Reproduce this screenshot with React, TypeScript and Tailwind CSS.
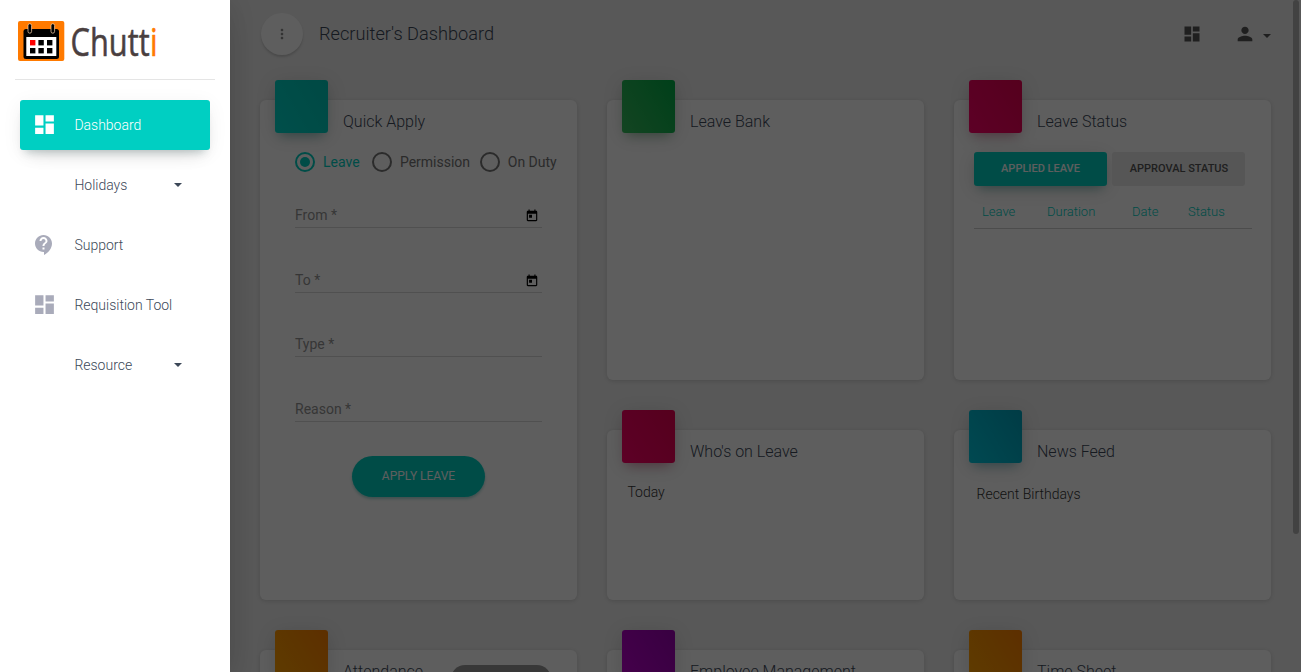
import type { ReactNode } from "react";
import {
  MdDashboard,
  MdContactSupport,
  MdPerson,
  MdMoreVert,
} from "react-icons/md";

function Caret({ className }: { className: string }) {
  return (
    <svg viewBox="0 0 8 4" className={"h-1 w-2 " + className}>
      <path d="M0 0h8L4 4z" fill="currentColor" />
    </svg>
  );
}

function Logo() {
  return (
    <svg width="150" height="42" viewBox="0 0 150 42" className="overflow-visible">
      <rect x="0" y="1" width="46.3" height="40" rx="2" fill="#ff7a00" />
      <rect x="5.5" y="9" width="35.5" height="30" rx="2.5" fill="#000" />
      <rect x="8.3" y="17" width="30" height="19" fill="#fff" />
      <rect x="10" y="3.7" width="3.6" height="9.5" rx="1.8" fill="#000" stroke="#ffd9b0" strokeWidth="0.7" />
      <rect x="33" y="3.7" width="3.6" height="9.5" rx="1.8" fill="#000" stroke="#ffd9b0" strokeWidth="0.7" />
      <rect x="12" y="20" width="5.4" height="5.4" fill="#f00" />
      <rect x="20.4" y="20" width="5.4" height="5.4" fill="#000" />
      <rect x="29" y="20" width="5.4" height="5.4" fill="#000" />
      <rect x="12" y="28" width="5.4" height="5.4" fill="#000" />
      <rect x="20.4" y="28" width="5.4" height="5.4" fill="#000" />
      <rect x="29" y="28" width="5.4" height="5.4" fill="#000" />
      <g className="font-['Open_Sans',sans-serif] text-[39px] font-normal" strokeWidth="0.6" strokeLinejoin="round">
        <text x="52.6" y="36.3" textLength="79" lengthAdjust="spacingAndGlyphs" fill="#4a3f3f" stroke="#4a3f3f">
          Chutt
        </text>
        <text x="132" y="36.3" textLength="7.6" lengthAdjust="spacingAndGlyphs" fill="#ff7a00" stroke="#ff7a00">
          i
        </text>
      </g>
    </svg>
  );
}

function NavItem({ label, icon, active, caret }: { label: string; icon?: ReactNode; active?: boolean; caret?: boolean }) {
  return (
    <a
      className={
        "flex h-[50px] items-center rounded-[3px] px-3 text-sm font-light " +
        (active
          ? "bg-[#00cfc2] text-white shadow-[0_12px_20px_-10px_rgba(0,0,0,0.14),0_4px_20px_0_rgba(0,0,0,0.06),0_7px_8px_-5px_rgba(0,60,60,0.2)]"
          : "text-[#3c4858]")
      }
    >
      <span className={"mr-[18.4px] flex size-6 items-center justify-center " + (active ? "text-white" : "text-[#a9abba]")}>{icon}</span>
      <span className="w-[99.6px]">{label}</span>
      {caret && <Caret className="text-[#3c4858]" />}
    </a>
  );
}

function Card({ title, tile, className, badge, children }: { title: string; tile: string; className: string; badge?: ReactNode; children?: ReactNode }) {
  return (
    <section className={"rounded-md bg-white shadow-[0_1px_4px_0_rgba(0,0,0,0.14)] " + className}>
      <div className="flex px-[15px]">
        <div className={"-mt-5 size-[53px] shrink-0 rounded-[3px] " + tile} />
        <h4 className="ml-[15px] mt-[10px] text-base leading-6 font-light whitespace-nowrap text-[#3c4858]">{title}</h4>
        {badge}
      </div>
      {children}
    </section>
  );
}

function Radio({ label, checked }: { label: string; checked?: boolean }) {
  return (
    <label className={"flex items-center gap-2 text-sm " + (checked ? "text-[#00cfc2]" : "text-[#757575]")}>
      <span className="flex size-5 items-center justify-center rounded-full border-2 border-current">
        {checked && <span className="size-[10px] rounded-full bg-current" />}
      </span>
      {label}
    </label>
  );
}

function Field({ label, date, className }: { label: string; date?: boolean; className: string }) {
  return (
    <div className={"flex w-[247px] items-center justify-between border-b border-[#dadada] pb-0.5 text-sm text-[#949494] " + className}>
      {label}
      {date && (
        <svg viewBox="0 0 24 24" className="mt-[3px] mr-[3px] size-[14px] text-black" fill="currentColor">
          <path d="M19 3h-1V1h-2v2H8V1H6v2H5c-1.1 0-2 .9-2 2v14c0 1.100.9 2 2 2h14c1.100 0 2-.9 2-2V5c0-1.100-.9-2-2-2zm0 16H5V8h14v11zM7 10h5v5H7z" />
        </svg>
      )}
    </div>
  );
}

const PINK = "bg-[linear-gradient(60deg,#fc0068,#e60050)] shadow-[0_4px_20px_0_rgba(0,0,0,0.14),0_7px_10px_-5px_rgba(233,30,99,0.4)]";
const ORANGE = "bg-[linear-gradient(60deg,#ffa200,#fb8000)] shadow-[0_4px_20px_0_rgba(0,0,0,0.14)]";
const TEAL = "bg-[linear-gradient(60deg,#00d6ca,#00c6b8)] shadow-[0_4px_20px_0_rgba(0,0,0,0.14),0_7px_10px_-5px_rgba(0,150,140,0.4)]";
const GREEN = "bg-[linear-gradient(60deg,#36ba5c,#00ac46)] shadow-[0_4px_20px_0_rgba(0,0,0,0.14),0_7px_10px_-5px_rgba(40,150,70,0.4)]";
const CYAN = "bg-[linear-gradient(60deg,#00c6dc,#00a2bc)] shadow-[0_4px_20px_0_rgba(0,0,0,0.14),0_7px_10px_-5px_rgba(0,150,170,0.4)]";
const PURPLE = "bg-[linear-gradient(60deg,#bb00cc,#9800b0)] shadow-[0_4px_20px_0_rgba(0,0,0,0.14)]";

export default function App() {
  return (
    <div className="flex h-[672px] w-[1301px] overflow-hidden bg-[#eee] font-['Roboto',sans-serif]">
      <aside className="relative z-20 w-[230px] shrink-0 bg-white shadow-[0_10px_30px_-12px_rgba(0,0,0,0.2),0_4px_25px_0_rgba(0,0,0,0.1)]">
        <div className="mx-[15px] h-20 border-b border-[#e5e5e5] pt-5 pl-[3px]">
          <Logo />
        </div>
        <nav className="flex flex-col gap-[10px] px-5 pt-5">
          <NavItem label="Dashboard" active icon={<MdDashboard size={25} className="-mt-px ml-px shrink-0" />} />
          <NavItem label="Holidays" caret />
          <NavItem label="Support" icon={<MdContactSupport size={24} />} />
          <NavItem label="Requisition Tool" icon={<MdDashboard size={25} className="-mt-px ml-px shrink-0" />} />
          <NavItem label="Resource" caret />
        </nav>
      </aside>

      <main className="flex min-w-0 flex-1">
        <div className="w-[1063px] shrink-0 pl-[30px]">
          <header className="flex h-[100px] items-start pt-[13px]">
            <button className="ml-px flex size-[42px] items-center justify-center rounded-full bg-white text-[#8a8a8a] shadow-[0_2px_2px_0_rgba(120,120,120,0.3)]">
              <MdMoreVert size={16} />
            </button>
            <h1 className="ml-4 mt-[7px] text-[18.2px] leading-7 font-light text-[#3c4858]">Recruiter's Dashboard</h1>
            <div className="ml-auto mr-[22px] flex items-center pt-[10px] text-[#555]">
              <MdDashboard size={20} />
              <MdPerson size={22} className="ml-8" />
              <Caret className="ml-[7px] mt-[3px]" />
            </div>
          </header>

          <div className="grid grid-cols-[317px_317px_317px] grid-rows-[280px_170px_200px] gap-x-[30px]">
            <Card title="Quick Apply" tile={TEAL} className="row-span-2 h-[500px]">
              <div className="flex gap-[12.3px] pt-[18px] pl-[35px]">
                <Radio label="Leave" checked />
                <div className="flex gap-[9.7px]">
                  <Radio label="Permission" />
                  <Radio label="On Duty" />
                </div>
              </div>
              <div className="pl-[35px]">
                <Field label="From *" date className="mt-8 h-6" />
                <Field label="To *" date className="mt-[41px] h-6" />
                <Field label="Type *" className="mt-10 h-6" />
                <Field label="Reason *" className="mt-[41px] h-6" />
              </div>
              <button className="mx-auto mt-[34px] flex h-[41px] w-[133px] items-center justify-center rounded-full bg-[#00cfc2] pb-0.5 text-xs text-white shadow-[0_2px_3px_0_rgba(0,150,140,0.35)]">
                APPLY LEAVE
              </button>
            </Card>
            <Card title="Leave Bank" tile={GREEN} className="h-[280px]" />
            <Card title="Leave Status" tile={PINK} className="h-[280px]">
              <div className="flex gap-[5px] pt-[18px] pb-px pl-5 text-[11px] font-medium">
                <button className="h-[34px] w-[133px] rounded-[3px] bg-[#00cfc2] text-white shadow-[0_4px_20px_0_rgba(0,0,0,0.14),0_7px_10px_-5px_rgba(0,150,140,0.4)]">
                  APPLIED LEAVE
                </button>
                <button className="h-[34px] w-[133px] rounded-[3px] bg-[#e8e8e8] pl-px text-[#555]">APPROVAL STATUS</button>
              </div>
              <div className="mx-5 flex h-[42px] w-[278px] items-center border-b border-[#cfcfcf] pt-[9px] pl-2 text-[13px] font-light text-[#00cfc2]">
                <span className="w-[65px]">Leave</span>
                <span className="w-[85px]">Duration</span>
                <span className="w-[56px]">Date</span>
                <span>Status</span>
              </div>
            </Card>
            <Card title="Who's on Leave" tile={PINK} className="mt-[50px] h-[170px]">
              <p className="pt-[18px] pl-[20.4px] text-sm font-light text-[#333]">Today</p>
            </Card>
            <Card title="News Feed" tile={CYAN} className="mt-[50px] h-[170px]">
              <p className="pt-5 pl-[22.5px] text-sm font-light text-[#333]">Recent Birthdays</p>
            </Card>
            <Card
              title="Attendance"
              tile={ORANGE}
              className="mt-[100px] h-[280px]"
              badge={<div className="mt-[15px] mr-[11px] ml-auto h-7 w-[100px] rounded-full bg-[#999]" />}
            />
            <Card title="Employee Management" tile={PURPLE} className="mt-[100px] h-[280px]" />
            <Card title="Time Sheet" tile={ORANGE} className="mt-[100px] h-[280px]" />
          </div>
        </div>
        <div className="h-[534px] w-[6px] rounded-full bg-[#b4b4b4]" />
      </main>
      <div className="absolute top-0 left-0 z-10 h-[672px] w-[1301px] bg-black/63" />
    </div>
  );
}
